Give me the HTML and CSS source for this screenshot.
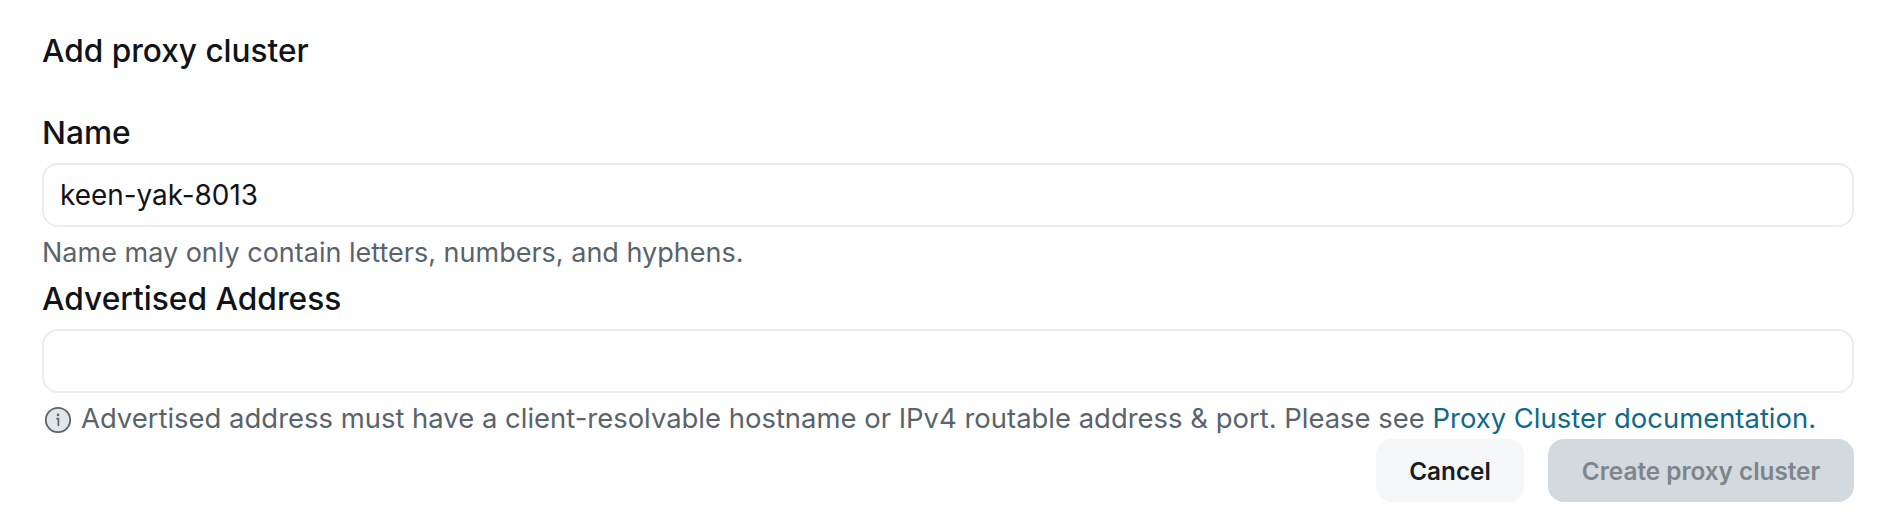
FILE: index.html
```html
<!DOCTYPE html>
<html lang="en">
<head>
    <meta charset="UTF-8">
    <title>Add proxy cluster</title>
    <link rel="stylesheet" href="styles.css">
</head>
<body>

<form class="dialog">
    <h2 class="dialog-title">Add proxy cluster</h2>

    <div class="field first">
        <label class="field-label" for="name">Name</label>
        <input class="field-input" id="name" type="text" value="keen-yak-8013">
        <div class="field-help">Name may only contain letters, numbers, and hyphens.</div>
    </div>

    <div class="field">
        <label class="field-label" for="address">Advertised Address</label>
        <input class="field-input" id="address" type="text">
        <div class="field-help with-icon">
            <svg class="info-icon" viewBox="0 0 28 28" width="28" height="28">
                <circle cx="14" cy="14" r="12.2" fill="#e3e6e9" stroke="#59636c" stroke-width="1.8"/>
                <circle cx="14" cy="8.9" r="1.3" fill="#59636c"/>
                <path d="M12.4 12.6h2v7.4" fill="none" stroke="#59636c" stroke-width="1.7"/>
            </svg>
            <span>Advertised address must have a client-resolvable hostname or IPv4 routable address &amp; port. Please see <a href="#">Proxy Cluster documentation.</a></span>
        </div>
    </div>

    <div class="actions">
        <button class="btn btn-cancel" type="button">Cancel</button>
        <button class="btn btn-create" type="button" disabled>Create proxy cluster</button>
    </div>
</form>

</body>
</html>
```

FILE: styles.css
```css
body {
    margin: 0;
    background: #ffffff;
    font-family: Inter, "Liberation Sans", sans-serif;
    color: #101418;
}
.dialog {
    padding: 32px 42px 0;
}
.dialog-title {
    margin: 0;
    font-size: 31.6px;
    font-weight: 500;
    line-height: 38px;
}
.field {
    margin-top: 9px;
}
.field.first {
    margin-top: 44px;
}
.field-label {
    display: block;
    font-size: 31.7px;
    font-weight: 500;
    line-height: 38px;
    margin-bottom: 11px;
}
.field-input {
    display: block;
    box-sizing: border-box;
    width: 100%;
    height: 64px;
    padding: 0 16px;
    border: 2px solid #e9edf0;
    border-radius: 16px;
    background: #ffffff;
    font-family: inherit;
    font-size: 27.9px;
    color: #101418;
    outline: none;
}
.field-help {
    margin-top: 8px;
    font-size: 27px;
    line-height: 36px;
    color: #59636c;
}
.field-help a {
    color: #0f6a8a;
    text-decoration: none;
}
.with-icon {
    display: flex;
    align-items: center;
    gap: 9px;
    margin-top: 7px;
    font-size: 27.45px;
    white-space: nowrap;
}
.info-icon {
    flex-shrink: 0;
    margin-top: 3px;
    margin-left: 2px;
}
.actions {
    display: flex;
    justify-content: flex-end;
    gap: 24px;
    margin-top: 3px;
}
.btn {
    height: 63px;
    border: none;
    border-radius: 16px;
    font-family: inherit;
    font-size: 24.3px;
    font-weight: 600;
}
.btn-cancel {
    width: 148px;
    background: #f4f6f8;
    color: #191d22;
}
.btn-create {
    width: 306px;
    background: #d2d9df;
    color: #7d858d;
}
```
